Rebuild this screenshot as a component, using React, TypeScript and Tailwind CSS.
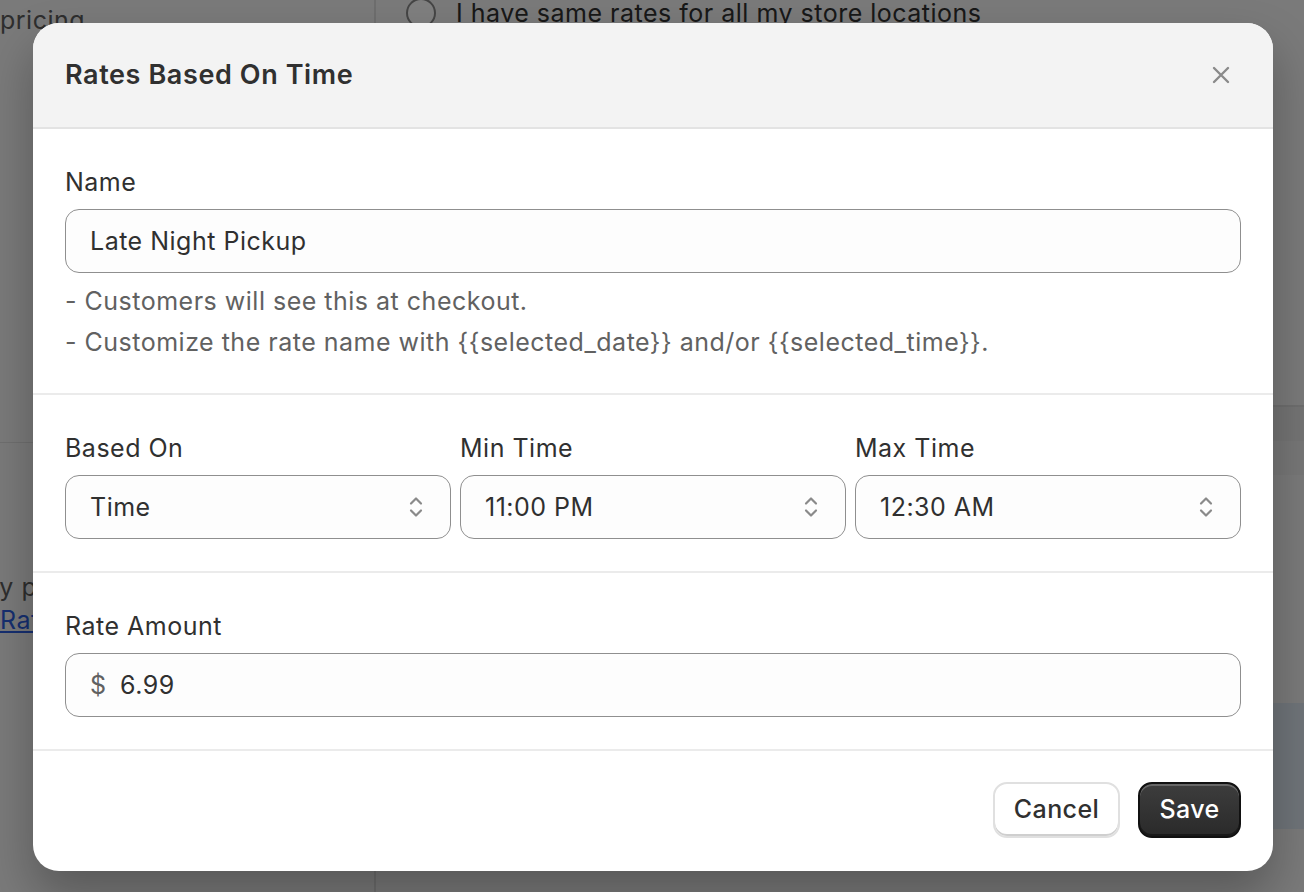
import { useState } from "react";

const font = { fontFamily: "Inter, 'Noto Sans', 'Liberation Sans', sans-serif" };

function UpDown() {
  return (
    <svg width="16" height="24" viewBox="0 0 16 24" fill="none" stroke="#8a8a8a" strokeWidth="2.2" strokeLinecap="round" strokeLinejoin="round">
      <path d="M3 8.5 8 3.5l5 5" />
      <path d="M3 15.5l5 5 5-5" />
    </svg>
  );
}

function CloseIcon() {
  return (
    <svg width="18" height="18" viewBox="0 0 18 18" fill="none" stroke="#8a8a8a" strokeWidth="2.4" strokeLinecap="round">
      <path d="M2 2l14 14M16 2 2 16" />
    </svg>
  );
}

function Label({ children }: { children: React.ReactNode }) {
  return <div className="text-[25px] leading-[32px] tracking-[0.5px] text-[#303030] mb-[11px]">{children}</div>;
}

function SelectBox({ value }: { value: string }) {
  return (
    <div className="h-[64px] rounded-[14px] border border-[#8f8f8f] bg-[#fdfdfd] pl-6 pr-[26px] flex items-center justify-between">
      <span className="text-[25px] tracking-[0.5px] text-[#303030] pt-[2px]">{value}</span>
      <UpDown />
    </div>
  );
}

// page behind the dialog, dimmed by the overlay
function PageBehind() {
  return (
    <div className="flex h-full bg-[#f4f4f4]">
      <div className="w-[376px] border-r-2 border-[#dcdcdc] flex flex-col">
        <div className="pt-[6px] text-[25px] leading-[28px] tracking-[0.5px] text-[#5c5c5c]">pricing</div>
        <div className="mt-[408px] border-t border-[#dedede]" />
        <div className="mt-[130px] -ml-[16px] text-[25px] leading-[28px] tracking-[0.5px] text-[#5c5c5c]">by pricing</div>
        <div className="mt-[5px] text-[25px] leading-[28px] tracking-[0.5px] text-[#2c5fe0] underline">Rates</div>
      </div>
      <div className="flex-1 flex flex-col pl-[30px]">
        <div className="flex items-center gap-[20px] -mt-[2px]">
          <div className="w-[30px] h-[30px] rounded-full border-2 border-[#8a8a8a] bg-white" />
          <span className="text-[25px] leading-[30px] tracking-[0.5px] text-[#303030]">I have same rates for all my store locations</span>
        </div>
        <div className="-ml-[30px] mt-[377px] h-[36px] border-t-2 border-[#dcdcdc] bg-[#e8e8e8]" />
        <div className="-ml-[30px] h-[34px] bg-[#eeeeee]" />
        <div className="-ml-[30px] mt-[228px] h-[126px] bg-[#dfe8f2]" />
      </div>
    </div>
  );
}

export default function App() {
  const [name] = useState("Late Night Pickup");
  const [amount] = useState("6.99");

  return (
    <div className="relative w-full h-[892px] overflow-hidden" style={font}>
      <PageBehind />
      <div className="absolute inset-0 bg-black/50" />

      <div className="absolute left-[33px] top-[23px] w-[1240px] rounded-[26px] bg-white overflow-hidden shadow-[0_24px_48px_rgba(0,0,0,0.28)]">
        {/* header */}
        <div className="h-[106px] bg-[#f3f3f3] border-b-2 border-[#e3e3e3] pl-8 pr-8 flex items-center justify-between">
          <h2 className="text-[27px] font-semibold tracking-[0.6px] text-[#303030]">Rates Based On Time</h2>
          <button className="w-10 h-10 flex items-center justify-center">
            <CloseIcon />
          </button>
        </div>

        {/* name */}
        <div className="px-8 pt-[37px] pb-[30px] border-b-2 border-[#ebebeb]">
          <Label>Name</Label>
          <div className="h-[64px] rounded-[14px] border border-[#8f8f8f] bg-[#fdfdfd] px-6 flex items-center">
            <span className="text-[25px] tracking-[0.5px] text-[#303030] pt-[2px]">{name}</span>
          </div>
          <div className="mt-[8px] text-[25px] leading-[41px] tracking-[0.5px] text-[#616161]">
            <div>- Customers will see this at checkout.</div>
            <div>- Customize the rate name with {"{{selected_date}}"} and/or {"{{selected_time}}"}.</div>
          </div>
        </div>

        {/* time range */}
        <div className="px-8 pt-[37px] pb-[32px] border-b-2 border-[#ebebeb] grid grid-cols-3 gap-x-[9px]">
          <div>
            <Label>Based On</Label>
            <SelectBox value="Time" />
          </div>
          <div>
            <Label>Min Time</Label>
            <SelectBox value="11:00 PM" />
          </div>
          <div>
            <Label>Max Time</Label>
            <SelectBox value="12:30 AM" />
          </div>
        </div>

        {/* amount */}
        <div className="px-8 pt-[37px] pb-[32px] border-b-2 border-[#ebebeb]">
          <Label>Rate Amount</Label>
          <div className="h-[64px] rounded-[14px] border border-[#8f8f8f] bg-[#fdfdfd] px-6 flex items-center gap-[14px] pt-[2px]">
            <span className="text-[25px] text-[#616161]">$</span>
            <span className="text-[25px] tracking-[0.5px] text-[#303030]">{amount}</span>
          </div>
        </div>

        {/* footer */}
        <div className="px-8 pt-[31px] pb-[33px] flex justify-end gap-[18px]">
          <button className="h-[56px] w-[127px] rounded-[14px] border-2 border-[#e0e0e0] bg-white shadow-[inset_0_-2px_0_#cfcfcf] text-[25px] font-medium tracking-[0.4px] text-[#303030]">
            Cancel
          </button>
          <button className="h-[56px] w-[103px] rounded-[14px] border-2 border-[#111] bg-gradient-to-b from-[#3d3d3d] to-[#2a2a2a] shadow-[inset_0_2px_0_rgba(255,255,255,0.22),inset_0_-2px_0_rgba(0,0,0,0.4)] text-[25px] font-medium tracking-[0.4px] text-white">
            Save
          </button>
        </div>
      </div>
    </div>
  );
}
